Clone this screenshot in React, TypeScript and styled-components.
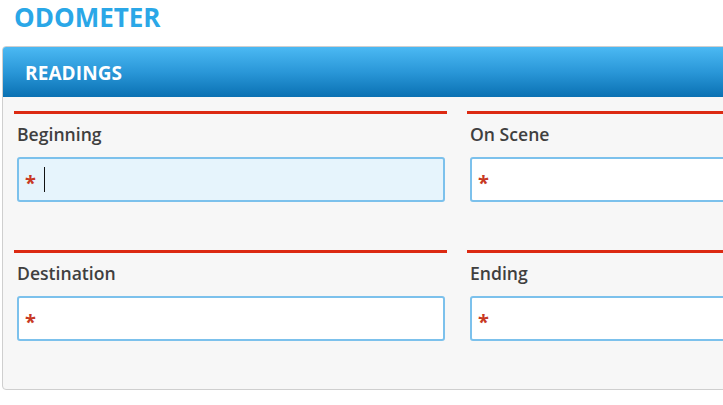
import React from 'react';
import styled, { createGlobalStyle } from 'styled-components';

const GlobalStyle = createGlobalStyle`
    html, body {
        margin: 0;
        padding: 0;
        background: #fff;
        overflow: hidden;
    }

    body {
        font-family: "Open Sans", "Liberation Sans", Arial, sans-serif;
    }
`;

const Page = styled.div`
    width: 100vw;
    overflow: hidden;
    padding: 0 0 0 2px;
    box-sizing: border-box;
`;

const Title = styled.h1`
    margin: 0;
    padding: 0 0 0 12px;
    height: 46px;
    line-height: 34px;
    font-size: 26px;
    font-weight: 700;
    color: #2aa7e7;
`;

const Panel = styled.section`
    width: 940px;
    border: 1px solid #cfcfcf;
    border-radius: 4px;
    background: #f7f7f7;
    overflow: hidden;
`;

const PanelHeader = styled.header`
    height: 50px;
    display: flex;
    align-items: center;
    padding: 2px 0 0 22px;
    box-sizing: border-box;
    background: linear-gradient(to bottom, #4bb9f3 0%, #2a97d8 50%, #0a71b3 100%);
    color: #fff;
    font-size: 19px;
    font-weight: 700;
    letter-spacing: 0.1px;
`;

const PanelBody = styled.div`
    display: grid;
    grid-template-columns: 433px 433px;
    column-gap: 20px;
    padding: 14px 0 0 11px;
`;

const Field = styled.div`
    border-top: 3px solid #dc2a12;
    padding: 0 2px 48px 3px;
`;

const Label = styled.label`
    display: block;
    height: 43px;
    padding-top: 8px;
    box-sizing: border-box;
    font-size: 17.6px;
    font-weight: 600;
    color: #3f3f3f;
    line-height: 24px;
`;

const InputBox = styled.div<{ $active?: boolean }>`
    height: 45px;
    box-sizing: border-box;
    display: flex;
    align-items: center;
    padding: 0 0 0 6px;
    border: 2px solid #7cc1ec;
    border-radius: 3px;
    background: ${p => (p.$active ? '#e6f4fc' : '#fff')};
`;

const Required = styled.span`
    color: #c83823;
    font-size: 20px;
    font-weight: 700;
    line-height: 1;
    padding-top: 6px;
    width: 19px;
`;

const Caret = styled.span`
    width: 1px;
    height: 25px;
    background: #111;
`;

const fields = [
    { label: 'Beginning', active: true },
    { label: 'On Scene' },
    { label: 'Destination' },
    { label: 'Ending' },
];

const App: React.FC = () => {
    return (
        <>
            <GlobalStyle />
            <Page>
                <Title>ODOMETER</Title>
                <Panel>
                    <PanelHeader>READINGS</PanelHeader>
                    <PanelBody>
                        {fields.map(field => (
                            <Field key={field.label}>
                                <Label>{field.label}</Label>
                                <InputBox $active={field.active}>
                                    <Required>*</Required>
                                    {field.active && <Caret />}
                                </InputBox>
                            </Field>
                        ))}
                    </PanelBody>
                </Panel>
            </Page>
        </>
    );
};

export default App;
